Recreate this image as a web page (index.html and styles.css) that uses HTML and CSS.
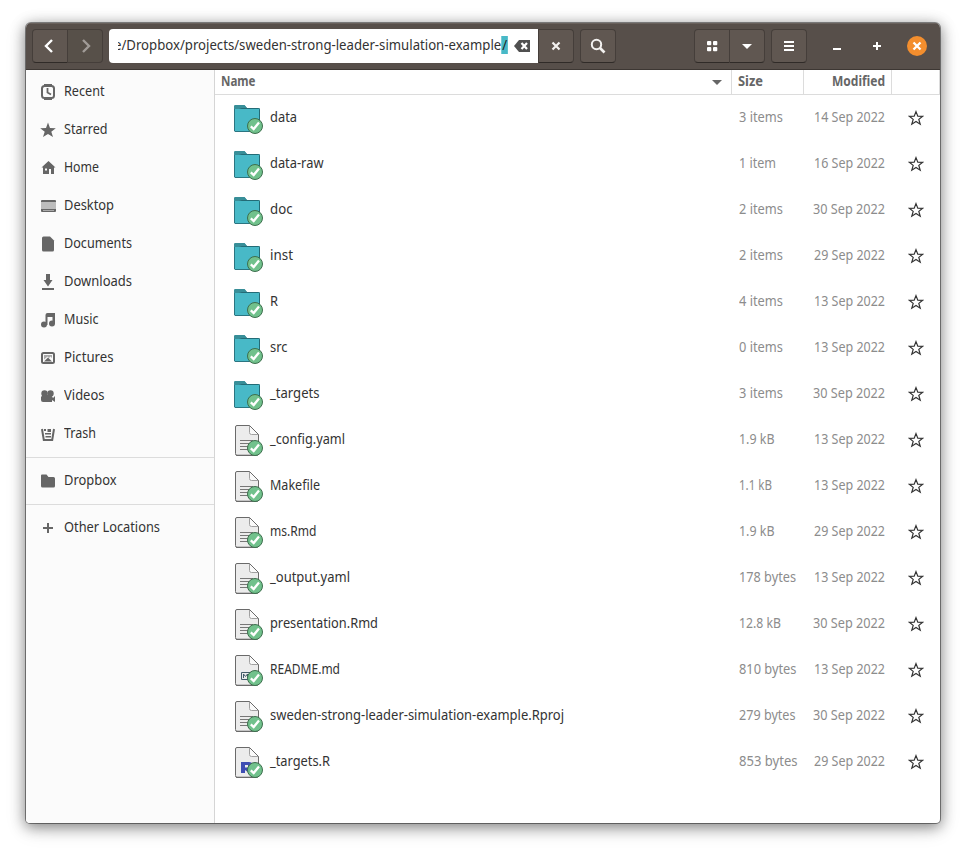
FILE: index.html
```html
<!DOCTYPE html>
<html lang="en">
<head>
<meta charset="utf-8">
<title>Files</title>
<link rel="stylesheet" href="styles.css">
</head>
<body>
<svg class="defs" width="0" height="0">
  <symbol id="folder" viewBox="0 0 32 32">
    <path d="M3 29V4.5Q3 3 4.5 3H13.5L16 6H28Q29 6 29 7.500V29Z" fill="#388e98"/>
    <rect x="3.500" y="6.500" width="25" height="23" rx="1" fill="#48b9c7" stroke="#236b76"/>
    <path d="M3 7V4.500Q3 3 4.500 3H12.500Q14 3 15 5L16 6H11L8 7Z" fill="#388e98"/>
    <path d="M3.500 29V7M4 29.500H28" stroke="#2b7581" fill="none"/>
  </symbol>
  <symbol id="page" viewBox="0 0 32 32">
    <path d="M6 1.500H18.500L27.500 10.500V29.500Q27.500 31.500 25.500 31.500H6Q4.500 31.500 4.500 29.500V3Q4.500 1.500 6 1.500Z" fill="#ececec" stroke="#6a6a6a"/>
    <path d="M18.500 1.500V8.500Q18.500 10.500 20.500 10.500H27.500Z" fill="#fafafa" stroke="#a0a0a0"/>
    <path d="M18.500 1.500L27.500 10.500M5 31.200H26" stroke="#6a6a6a" fill="none"/>
  </symbol>
  <symbol id="lines" viewBox="0 0 32 32"><path d="M9 16.500H22M9 19.500H22M9 22.500H22M9 25.500H22" stroke="#777" fill="none"/></symbol>
  <symbol id="md" viewBox="0 0 32 32"><path d="M22 18.500H10.500V25.500H22M12.500 24V20L14.500 22.500L16.500 20V24" stroke="#435b68" fill="none"/></symbol>
  <symbol id="rfile" viewBox="0 0 32 32"><path d="M10 16H18Q22 16 22 20L18 23L22 27H18L14 24V27H10ZM14 19V21.500H17V19Z" fill="#3e4db3" fill-rule="evenodd"/></symbol>
  <symbol id="ok" viewBox="0 0 32 32">
    <circle cx="24" cy="24" r="7.500" fill="#71c18c" stroke="#3d6e4d"/>
    <path d="M19.800 24.300L22.700 27L28 20.500" stroke="#fff" stroke-width="2.300" fill="none"/>
  </symbol>
  <symbol id="star" viewBox="0 0 16 16"><path d="M8 1.600L9.800 6.200L14.700 6.300L10.800 9.400L12.200 14.200L8 11.400L3.800 14.200L5.200 9.400L1.300 6.300L6.200 6.200Z" fill="none" stroke="#333" stroke-width="1.200"/></symbol>
</svg>
<div class="window">
  <header class="bar">
    <div class="group">
      <button class="btn left" aria-label="Back"><svg width="16" height="16"><path d="M10 2L4 8L10 14" class="chev"/></svg></button>
      <button class="btn right off" aria-label="Forward"><svg width="16" height="16"><path d="M6 2L12 8L6 14" class="chev"/></svg></button>
    </div>
    <div class="group location">
      <div class="entry"><div class="path"><span class="fit pathtext" data-w="394">e/Dropbox/projects/sweden-strong-leader-simulation-example<mark>/</mark></span></div>
        <svg width="16" height="16"><path d="M5 2H16V14H5L0 8Z" fill="#505050"/><path d="M7.500 5L13 11M13 5L7.500 11" stroke="#fff" stroke-width="2.200"/></svg></div>
      <button class="btn right" aria-label="Clear"><svg width="16" height="16"><path d="M4.500 4.500L11.500 11.500M11.500 4.500L4.500 11.500" stroke="#f3f1ef" stroke-width="2.200"/></svg></button>
    </div>
    <button class="btn solo" aria-label="Search"><svg width="16" height="16"><circle cx="6.500" cy="6.500" r="4.700" fill="none" stroke="#f3f1ef" stroke-width="2"/><path d="M10 10L14.500 14.500" stroke="#f3f1ef" stroke-width="2.700"/></svg></button>
    <div class="grow"></div>
    <div class="group">
      <button class="btn left" aria-label="Grid"><svg width="16" height="16" fill="#fff"><rect x="3" y="3" width="4.300" height="4.300" rx="1"/><rect x="9" y="3" width="4.300" height="4.300" rx="1"/><rect x="3" y="9" width="4.300" height="4.300" rx="1"/><rect x="9" y="9" width="4.300" height="4.300" rx="1"/></svg></button>
      <button class="btn right" aria-label="View options"><svg width="16" height="16"><path d="M3 6H13L8 11Z" fill="#fff"/></svg></button>
    </div>
    <button class="btn solo menu" aria-label="Menu"><svg width="16" height="16"><path d="M3 4H13M3 8H13M3 12H13" stroke="#fff" stroke-width="2"/></svg></button>
    <svg class="ctl min" width="16" height="16"><path d="M4 11H12" stroke="#fff" stroke-width="2"/></svg>
    <svg class="ctl max" width="16" height="16"><path d="M4 8H12M8 4V12" stroke="#fff" stroke-width="2"/></svg>
    <svg class="close" width="20" height="20"><circle cx="10" cy="10" r="10" fill="#f38e2e"/><path d="M6.500 6.500L13.500 13.500M13.500 6.500L6.500 13.500" stroke="#fff" stroke-width="2.300"/></svg>
  </header>
  <div class="content">
    <nav class="side">
      <a><svg width="16" height="16"><rect x="2" y="2" width="12" height="12" rx="2.500" fill="none" stroke="#666" stroke-width="2"/><path d="M4 1H12M4 15H12" stroke="#666" stroke-width="2"/><path d="M7.500 4V8.500L11 10.500" fill="none" stroke="#666" stroke-width="1.800"/></svg><span class="fit" data-w="40.500">Recent</span></a>
      <a><svg width="16" height="16"><path d="M8 .5L10 6L15.800 6.200L11.300 9.800L13 15L8 12L3 15L4.700 9.800L.2 6.200L6 6Z" fill="#666"/></svg><span class="fit" data-w="43.500">Starred</span></a>
      <a><svg width="16" height="16"><path d="M8.500 1L15.500 7.500H14V14H11V9H9V14H3V7.500H1.500ZM5 8.500V10.500H7V8.500Z" fill="#666" fill-rule="evenodd"/></svg><span class="fit" data-w="35">Home</span></a>
      <a><svg width="16" height="16"><rect x="1" y="2" width="15" height="12" rx="1" fill="#666"/><path d="M1 4H16V11H1Z" fill="#bdbdbd"/><path d="M3.500 12.500H14" stroke="#eee" stroke-dasharray="1 1"/></svg><span class="fit" data-w="50">Desktop</span></a>
      <a><svg width="16" height="16"><path d="M3.500 .5H10L14 4.500V14Q14 15.500 12.500 15.500H3.500Q2 15.500 2 14V2Q2 .5 3.500 .5Z" fill="#666"/></svg><span class="fit" data-w="68">Documents</span></a>
      <a><svg width="16" height="16"><path d="M6 0H10V6H12.500L8 12.500L3.500 6H6ZM2 14H14V16H2Z" fill="#666"/></svg><span class="fit" data-w="68">Downloads</span></a>
      <a><svg width="16" height="16"><path d="M5.500 3Q5.500 1 7.500 1H15V12H12.500V5H7.500V13H5.500Z" fill="#666"/><circle cx="4" cy="12.500" r="3" fill="#666"/><circle cx="12" cy="11.500" r="3" fill="#666"/></svg><span class="fit" data-w="34.500">Music</span></a>
      <a><svg width="16" height="16"><rect x="2" y="3" width="12" height="10" rx="1.500" fill="none" stroke="#666" stroke-width="2"/><path d="M4 5H12V8L10.500 6.500L9 8L7.500 6.500L4 9.500Z" fill="#aaa"/><path d="M4 11.500L8 7.500L12 11.500Z" fill="#666"/></svg><span class="fit" data-w="49.500">Pictures</span></a>
      <a><svg width="16" height="16" fill="#666"><circle cx="4.500" cy="5.500" r="3.200"/><circle cx="10.500" cy="5.500" r="3.200"/><path d="M1 9Q2 7 4 7H11L13 10L15 8V14L12 12V14H3Q1 14 1 12Z"/></svg><span class="fit" data-w="40.500">Videos</span></a>
      <a><svg width="16" height="16"><path d="M2 3L3.800 14H12.200L14 3" fill="none" stroke="#666" stroke-width="2"/><path d="M4 3H6V5H4ZM7.500 3H11V6H7.500ZM5 7H11V8.500H5ZM5.500 10H11V11.500H5.500Z" fill="#666"/></svg><span class="fit" data-w="32">Trash</span></a>
      <hr>
      <a><svg width="16" height="16"><path d="M2 1.500H6.500L8.500 4H13.500Q15 4 15 5.500V13Q15 14.500 13.500 14.500H2.500Q1 14.500 1 13V2.500Q1 1.500 2 1.500Z" fill="#666"/></svg><span class="fit" data-w="52.500">Dropbox</span></a>
      <hr>
      <a><svg width="16" height="16"><path d="M3 8H13M8 3V13" stroke="#666" stroke-width="2"/></svg><span class="fit" data-w="96">Other Locations</span></a>
    </nav>
    <main class="list">
      <div class="head">
        <div class="name"><span class="fit" data-w="34.500">Name</span><svg width="16" height="16"><path d="M3 6H13L8 11Z" fill="#666"/></svg></div>
        <div class="size"><span class="fit" data-w="25">Size</span></div>
        <div class="date"><span class="fit" data-w="53">Modified</span></div>
        <div class="fav"></div>
      </div>
      <div id="rows"></div>
    </main>
  </div>
</div>
<script src="files.js"></script>
</body>
</html>
```
FILE: styles.css
```css
* { box-sizing: border-box; }
body { margin: 0; height: 852px; overflow: hidden; background: #fff; font: 14px/20px "Noto Sans", "Open Sans", sans-serif; color: #333; }
.defs { position: absolute; }
svg { display: block; flex: none; }
.window { width: 914px; height: 800px; margin: 23px 0 0 26px; border-radius: 5px 5px 4px 4px; overflow: hidden; background: #fff; box-shadow: 0 0 0 1px rgba(0,0,0,.42), 0 3px 14px 1px rgba(0,0,0,.42), 0 5px 22px rgba(0,0,0,.14); }
.bar { height: 47px; background: #574f4a; border-top: 1px solid #69615c; border-bottom: 1px solid #3d3733; display: flex; align-items: center; padding: 0 13px 1px 6px; }
.group { display: flex; }
.btn { width: 36px; height: 34px; padding: 0; display: flex; align-items: center; justify-content: center; background: #605751; border: 1px solid #453e3a; border-bottom-color: #302b28; border-radius: 4px; }
.btn.left { border-radius: 4px 0 0 4px; }
.btn.right { border-radius: 0 4px 4px 0; border-left: 0; width: 35px; }
.btn.off { background: #575049; border-bottom-color: #453e3a; }
.chev { fill: none; stroke: #fff; stroke-width: 2.400; }
.off .chev { stroke: #a09b97; }
.location { margin: 0 6px; }
.location .btn { border-left: 1px solid #453e3a; width: 36px; }
.entry { width: 429px; height: 34px; background: #fff; border-radius: 4px 0 0 4px; padding: 0 8px 0 9px; display: flex; align-items: center; gap: 6px; }
.path { width: 390px; display: flex; justify-content: flex-end; overflow: hidden; }
.pathtext { position: relative; top: -1px; }
mark { background: #48b9c7; color: #222; padding: 0 1px; }
.grow { flex: 1; }
.menu { margin-left: 6px; }
.min { margin-left: 22px; }
.max { margin-left: 24px; }
.close { margin-left: 22px; }
.content { display: flex; height: 753px; }
.side { width: 189px; background: #fbfbfb; border-right: 1px solid #d5d5d5; padding-top: 3px; }
.side a { height: 38px; padding-left: 14px; display: flex; align-items: center; gap: 8px; }
.side hr { border: 0; height: 1px; background: #dcdcdc; margin: 4px 0; }
.fit { display: inline-block; white-space: nowrap; transform-origin: 0 50%; }
.side .fit, .row .fit { position: relative; top: -1px; }
.list { flex: 1; }
.head, .row { display: grid; grid-template-columns: 517px 72px 88px 48px; }
.head { height: 25px; border-bottom: 1px solid #dcdcdc; font-weight: 700; color: #666; line-height: 21px; }
.head > div { border-right: 1px solid #dcdcdc; }
.head .name { display: flex; justify-content: space-between; padding: 0 6px; }
.head .name svg { margin-top: 4px; }
.head .size { padding-left: 6px; }
.head .date { padding-right: 6px; display: flex; justify-content: flex-end; }
.row { height: 46px; align-items: center; }
.row .name { display: flex; align-items: center; padding-left: 16px; gap: 7px; }
.row .size, .row .date { color: #8c8c8c; }
.row .size { padding-left: 7px; }
.row .date { padding-right: 7px; display: flex; justify-content: flex-end; }
.row .fav { padding-left: 16px; }
```
FILE: files.js
```js
// name, label width, icon layer, size, size width, date, date width
const files = [
  ["data", 27, "folder", "3 items", 44, "14 Sep 2022", 71],
  ["data-raw", 53.5, "folder", "1 item", 37, "16 Sep 2022", 71],
  ["doc", 22.5, "folder", "2 items", 44, "30 Sep 2022", 72],
  ["inst", 23, "folder", "2 items", 44, "29 Sep 2022", 71],
  ["R", 8, "folder", "4 items", 44, "13 Sep 2022", 71],
  ["src", 17.5, "folder", "0 items", 44, "13 Sep 2022", 71],
  ["_targets", 49.5, "folder", "3 items", 44, "30 Sep 2022", 72],
  ["_config.yaml", 75, "lines", "1.9 kB", 35.5, "13 Sep 2022", 71],
  ["Makefile", 50, "lines", "1.1 kB", 33, "13 Sep 2022", 71],
  ["ms.Rmd", 46.5, "lines", "1.9 kB", 35.5, "29 Sep 2022", 71],
  ["_output.yaml", 80, "lines", "178 bytes", 57, "13 Sep 2022", 71],
  ["presentation.Rmd", 108, "lines", "12.8 kB", 42, "30 Sep 2022", 72],
  ["README.md", 70, "md", "810 bytes", 57.5, "13 Sep 2022", 71],
  ["sweden-strong-leader-simulation-example.Rproj", 294, "lines", "279 bytes", 56.5, "30 Sep 2022", 72],
  ["_targets.R", 60, "rfile", "853 bytes", 58.5, "29 Sep 2022", 71]
];
const use = id => `<use href="#${id}"/>`;
const label = (text, w) => `<span class="fit" data-w="${w}">${text}</span>`;
document.getElementById("rows").innerHTML = files.map(([name, nw, icon, size, sw, date, dw]) => `
  <div class="row">
    <div class="name"><svg width="32" height="32">${icon === "folder" ? "" : use("page")}${use(icon)}${use("ok")}</svg>${label(name, nw)}</div>
    <div class="size">${label(size, sw)}</div>
    <div class="date">${label(date, dw)}</div>
    <div class="fav"><svg width="16" height="16">${use("star")}</svg></div>
  </div>`).join("");

document.querySelectorAll(".fit").forEach(el => {
  const natural = el.getBoundingClientRect().width;
  const target = Number(el.dataset.w);
  el.style.transform = `scaleX(${target / natural})`;
  el.style.marginRight = `${target - natural}px`;
});
```
